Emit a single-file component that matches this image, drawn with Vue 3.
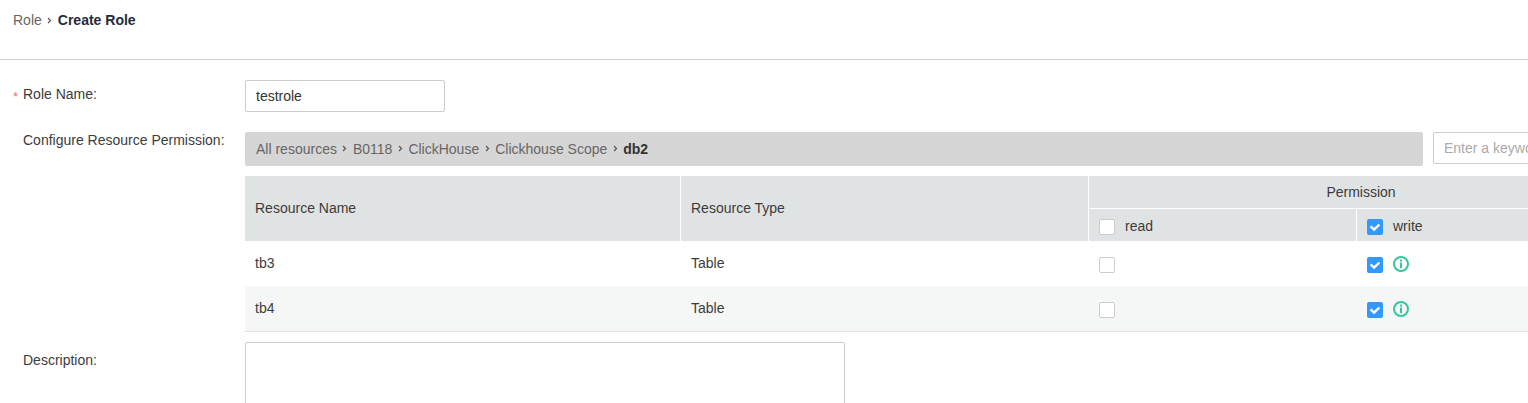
<script setup>
const crumbs = ['All resources', 'B0118', 'ClickHouse', 'Clickhouse Scope']
const rows = [
  { name: 'tb3', type: 'Table' },
  { name: 'tb4', type: 'Table' },
]
</script>

<template>
  <div class="page">
    <header class="top">
      <span class="crumb">Role</span>
      <svg class="sep" width="5" height="7" viewBox="0 0 5 7"><path d="M1 1l2.5 2.5L1 6" fill="none" stroke="#555" stroke-width="1.2" /></svg>
      <span class="current">Create Role</span>
    </header>

    <main class="form">
      <div class="field name-field">
        <label class="label"><span class="star">*</span>Role Name:</label>
        <input class="text-input name" value="testrole" />
      </div>

      <div class="field perm-field">
        <label class="label">Configure Resource Permission:</label>
        <div class="content">
          <div class="toolbar">
            <div class="path">
              <template v-for="c in crumbs" :key="c">
                <span>{{ c }}</span>
                <svg class="sep" width="5" height="7" viewBox="0 0 5 7"><path d="M1 1l2.5 2.5L1 6" fill="none" stroke="#555" stroke-width="1.2" /></svg>
              </template>
              <b>db2</b>
            </div>
            <input class="text-input search" placeholder="Enter a keyword" />
          </div>

          <table class="grid">
            <colgroup>
              <col class="c1" /><col class="c2" /><col class="c3" /><col class="c4" />
            </colgroup>
            <thead>
              <tr class="h1">
                <th rowspan="2">Resource Name</th>
                <th rowspan="2">Resource Type</th>
                <th colspan="2" class="perm">Permission</th>
              </tr>
              <tr class="h2">
                <th><span class="box"></span><span class="opt">read</span></th>
                <th>
                  <span class="box on"><svg width="16" height="16" viewBox="0 0 16 16"><path d="M3.6 7.4l3.5 3.3 5.3-5.2" fill="none" stroke="#fff" stroke-width="2.4" /></svg></span><span class="opt">write</span>
                </th>
              </tr>
            </thead>
            <tbody>
              <tr v-for="r in rows" :key="r.name">
                <td class="up">{{ r.name }}</td>
                <td class="up type">{{ r.type }}</td>
                <td><span class="box"></span></td>
                <td>
                  <span class="box on"><svg width="16" height="16" viewBox="0 0 16 16"><path d="M3.6 7.4l3.5 3.3 5.3-5.2" fill="none" stroke="#fff" stroke-width="2.4" /></svg></span>
                  <svg class="info" width="16" height="16" viewBox="0 0 16 16">
                    <circle cx="8" cy="8" r="7" fill="none" stroke="#35c6a0" stroke-width="2" />
                    <rect x="7" y="3.6" width="2" height="2" fill="#35c6a0" />
                    <rect x="7" y="6.6" width="2" height="5.6" fill="#35c6a0" />
                  </svg>
                </td>
              </tr>
            </tbody>
          </table>
        </div>
      </div>

      <div class="field desc-field">
        <label class="label">Description:</label>
        <textarea class="desc"></textarea>
      </div>
    </main>
  </div>
</template>

<style scoped>
.page {
  width: 1528px;
  height: 403px;
  overflow: hidden;
  background: #fff;
  font-family: "Liberation Sans", Arial, sans-serif;
  font-size: 14px;
  color: #333;
}
.top {
  height: 59px;
  border-bottom: 1px solid #ccc;
  padding-left: 13px;
  display: flex;
  align-items: flex-start;
  line-height: 16px;
}
.crumb { color: #666; margin-top: 12px; }
.top .sep { margin: 17px 5.5px 0 5.5px; }
.current { font-weight: 700; color: #252b3a; margin-top: 12px; }
.form { padding-top: 20px; }
.field { display: flex; }
.label {
  width: 222px;
  flex: none;
  margin-left: 23px;
  position: relative;
  line-height: 16px;
  color: #3c3c3c;
}
.star {
  position: absolute;
  left: -10px;
  top: 9px;
  color: #f66f6a;
  font-size: 13px;
}
.name-field { height: 32px; margin-bottom: 20px; }
.name-field .label { padding-top: 6px; }
.text-input {
  box-sizing: border-box;
  height: 32px;
  border: 1px solid #ccc;
  border-radius: 2px;
  padding: 0 10px;
  font: inherit;
  color: #333;
  outline: none;
  background: #fff;
}
.text-input::placeholder { color: #aaa; opacity: 1; }
.name { width: 200px; }
.content { flex: none; width: 1388px; }
.toolbar { display: flex; gap: 10px; align-items: flex-start; }
.path {
  width: 1178px;
  height: 34px;
  background: #d6d6d6;
  border-radius: 2px;
  box-sizing: border-box;
  padding-left: 11px;
  display: flex;
  align-items: center;
  color: #666;
  flex: none;
}
.path .sep { margin: 0 5.5px; position: relative; top: -1px; }
.path b { color: #333; }
.search { width: 200px; flex: none; }
.grid {
  margin-top: 10px;
  width: 1388px;
  table-layout: fixed;
  border-collapse: separate;
  border-spacing: 0;
}
.c1 { width: 435px; }
.c2 { width: 408px; }
.c3 { width: 268px; }
th {
  background: #e0e3e4;
  font-weight: 400;
  text-align: left;
  padding: 0 10px;
  color: #3c3c3c;
  border-left: 1px solid #fff;
}
th:first-child { border-left: 0; }
.h1 th { height: 32px; }
.h1 th.perm { text-align: center; border-bottom: 1px solid #fff; padding: 0; }
.h1 th[rowspan] { padding-bottom: 1px; }
.h2 th { height: 32px; }
.h2 th:first-child { border-left: 1px solid #fff; }
.h2 th .box { vertical-align: middle; position: relative; top: 1px; }
.opt { margin-left: 10px; vertical-align: middle; }
td {
  height: 45px;
  box-sizing: border-box;
  padding: 0 10px;
  color: #3c3c3c;
}
td.type { padding-left: 11px; }
td:nth-child(3), td:nth-child(4) { padding-left: 11px; }
td:nth-child(3) .box, td:nth-child(4) .box { position: relative; top: 1px; }
td.up { padding-bottom: 2px; }
tbody tr:nth-child(2) td {
  background: #f5f7f6;
  box-shadow: 0 1px 0 #e3e5e6;
}
.box {
  display: inline-block;
  width: 16px;
  height: 16px;
  box-sizing: border-box;
  border: 1px solid #ccc;
  border-radius: 2px;
  background: #fff;
  vertical-align: middle;
  overflow: hidden;
}
.box.on { background: #3399ff; border: 0; }
.box svg { display: block; }
.info { vertical-align: middle; margin-left: 10px; }
.desc-field { margin-top: 11px; }
.desc-field .label { padding-top: 10px; }
.desc {
  box-sizing: border-box;
  width: 600px;
  height: 90px;
  border: 1px solid #ccc;
  border-radius: 2px;
  resize: none;
  outline: none;
  flex: none;
  display: block;
}
</style>
